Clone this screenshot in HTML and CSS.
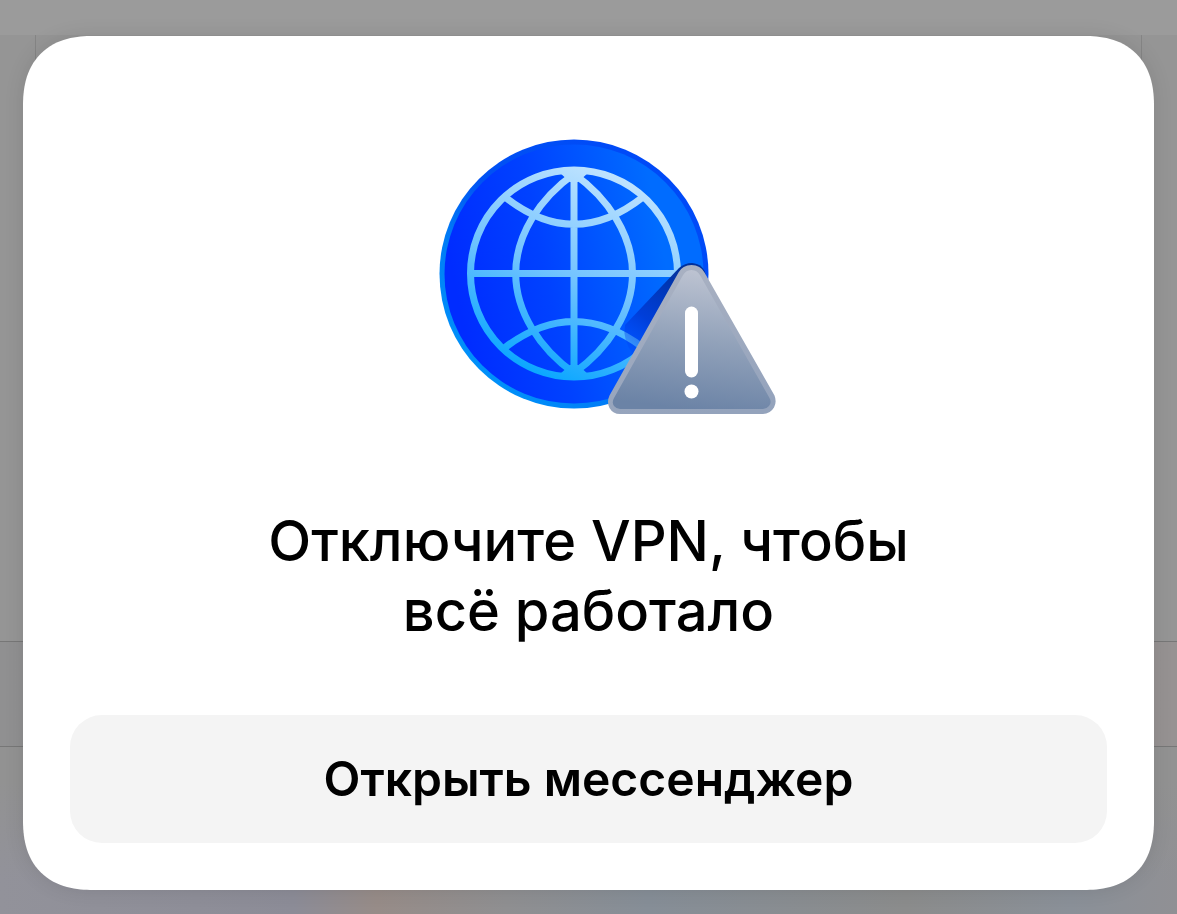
FILE: index.html
```html
<!DOCTYPE html>
<html lang="ru">
<head>
<meta charset="utf-8">
<meta name="viewport" content="width=device-width, initial-scale=1">
<title>Отключите VPN</title>
<link rel="stylesheet" href="styles.css">
</head>
<body>
<div class="backdrop" aria-hidden="true">
  <div class="backdrop-bar"></div>
  <div class="backdrop-sheet"></div>
  <div class="backdrop-row"></div>
  <div class="backdrop-foot"></div>
</div>
<main class="screen">
  <section class="dialog" role="dialog" aria-labelledby="dialog-title">
    <svg class="illustration" viewBox="0 0 340 278" aria-hidden="true">
      <defs>
        <linearGradient id="disc" x1="0" y1="0.6" x2="1" y2="0.4">
          <stop offset="0.05" stop-color="#002cff"/>
          <stop offset="0.4" stop-color="#0042ff"/>
          <stop offset="0.85" stop-color="#006cff"/>
        </linearGradient>
        <linearGradient id="rim" x1="0.1" y1="0.9" x2="0.9" y2="0.1">
          <stop offset="0" stop-color="#0096fa"/>
          <stop offset="0.3" stop-color="#007af6"/>
          <stop offset="0.5" stop-color="#0052f4"/>
          <stop offset="1" stop-color="#0048f8"/>
        </linearGradient>
        <linearGradient id="grid" gradientUnits="userSpaceOnUse" x1="92" y1="236" x2="176" y2="40">
          <stop offset="0" stop-color="#08a6ff"/>
          <stop offset="0.5" stop-color="#74c4ff"/>
          <stop offset="1" stop-color="#bce2ff"/>
        </linearGradient>
        <linearGradient id="shade" gradientUnits="userSpaceOnUse" x1="244" y1="132" x2="176" y2="218">
          <stop offset="0" stop-color="#00309c"/>
          <stop offset="0.55" stop-color="#0036d0" stop-opacity="0.8"/>
          <stop offset="1" stop-color="#0040ff" stop-opacity="0"/>
        </linearGradient>
        <linearGradient id="edge" x1="0.4" y1="0" x2="0.6" y2="1">
          <stop offset="0" stop-color="#a9b1c2"/>
          <stop offset="1" stop-color="#94a3bc"/>
        </linearGradient>
        <linearGradient id="face" x1="0.6" y1="0" x2="0.45" y2="1">
          <stop offset="0" stop-color="#bec4d2"/>
          <stop offset="0.5" stop-color="#92a2ba"/>
          <stop offset="1" stop-color="#6b83a6"/>
        </linearGradient>
        <clipPath id="disc-clip"><circle cx="136" cy="136" r="134.5"/></clipPath>
      </defs>
      <circle cx="136" cy="136" r="134.5" fill="url(#rim)"/>
      <circle cx="136" cy="136" r="129.500" fill="url(#disc)"/>
      <g fill="none" stroke="url(#grid)" stroke-width="7">
        <circle cx="136" cy="135.5" r="103.5"/>
        <path d="M136 36C102 60 77.700 97 77.700 135.500S102 211 136 235C170 211 194.500 174 194.500 135.500S170 60 136 36Z" stroke-linejoin="round"/>
        <path d="M67 59Q136 113.500 205 59M67 209.500Q136 157.500 205 209.500M32.500 135.400H239.500M136 32V239.010L136.010 32"/>
      </g>
      <path d="M122 35H150L140 44H132ZM122 236H150L140 227H132Z" fill="url(#grid)"/>
      <g clip-path="url(#disc-clip)">
        <path d="M241 130Q247 125 254 125Q266 126 268 138L222 226L196 218Q184 202 187 187Z" fill="url(#shade)"/>
      </g>
      <path d="M240.500 134.500Q244.500 127 253.500 127T266.500 134.500L336.500 257.500Q339 264 336 269.500Q332 276 325 276H182Q175 276 171.500 270Q168.500 264 171.500 257.500Z" fill="url(#edge)"/>
      <path d="M244.500 138Q247.500 132 253.500 132T262.500 138L331.500 260Q334 264.500 331 268Q328.500 271 325 271H182Q178.500 271 176 268Q173.500 264.500 176 260Z" fill="url(#face)"/>
      <rect x="247" y="168.500" width="13" height="71" rx="6.500" fill="#fff"/>
      <circle cx="253.500" cy="253.500" r="7" fill="#fff"/>
    </svg>
    <h1 class="title" id="dialog-title">Отключите VPN, чтобы<br>всё работало</h1>
    <button class="action" type="button">Открыть мессенджер</button>
  </section>
</main>
</body>
</html>
```
FILE: styles.css
```css
* {
  box-sizing: border-box;
}

body {
  margin: 0;
  background: #959595;
  color: #000;
  font-family: Inter, "Liberation Sans", sans-serif;
}

.backdrop {
  position: fixed;
  inset: 0;
  display: grid;
  grid-template-rows: 35px 1fr 106px 167px;
}

.backdrop-bar {
  background: #9b9b9b;
}

.backdrop-sheet {
  margin: 0 35px;
  border: 1px solid #858585;
  border-width: 0 1px;
}

.backdrop-row {
  background: linear-gradient(90deg, #909091, #969292);
  border: 1px solid #777;
  border-width: 1px 0;
}

.backdrop-foot {
  background:
    linear-gradient(180deg, #929292 20%, transparent 80%),
    linear-gradient(90deg, #92929a, #8c8c97 25%, #978c88 32%, #8f8f91 43%, #868e97 55%, #8b8c8c 77%, #8a9098 91%, #909094);
}

.screen {
  position: relative;
  display: flex;
  min-height: 100vh;
  padding: 36px 23px 24px;
}

.dialog {
  flex: 1;
  display: flex;
  flex-direction: column;
  align-items: center;
  padding: 102px 47px 47px;
  border-radius: 56px;
  background: #fff;
  box-shadow: 0 0 20px rgba(0, 0, 0, 0.1);
}

@supports (corner-shape: superellipse(1.25)) {
  .dialog {
    border-radius: 70px;
    corner-shape: superellipse(1.25);
  }
}

.illustration {
  width: 340px;
  max-width: 100%;
  margin-left: 38px;
}

.title {
  margin: 90px 0 0;
  font-size: 56px;
  font-weight: 500;
  line-height: 70px;
  text-align: center;
}

.action {
  width: 100%;
  margin-top: auto;
  padding: 34px 24px;
  border: 0;
  border-radius: 32px;
  background: #f4f4f4;
  color: #000;
  font: 600 48px/60px Inter, "Liberation Sans", sans-serif;
  cursor: pointer;
}
```
